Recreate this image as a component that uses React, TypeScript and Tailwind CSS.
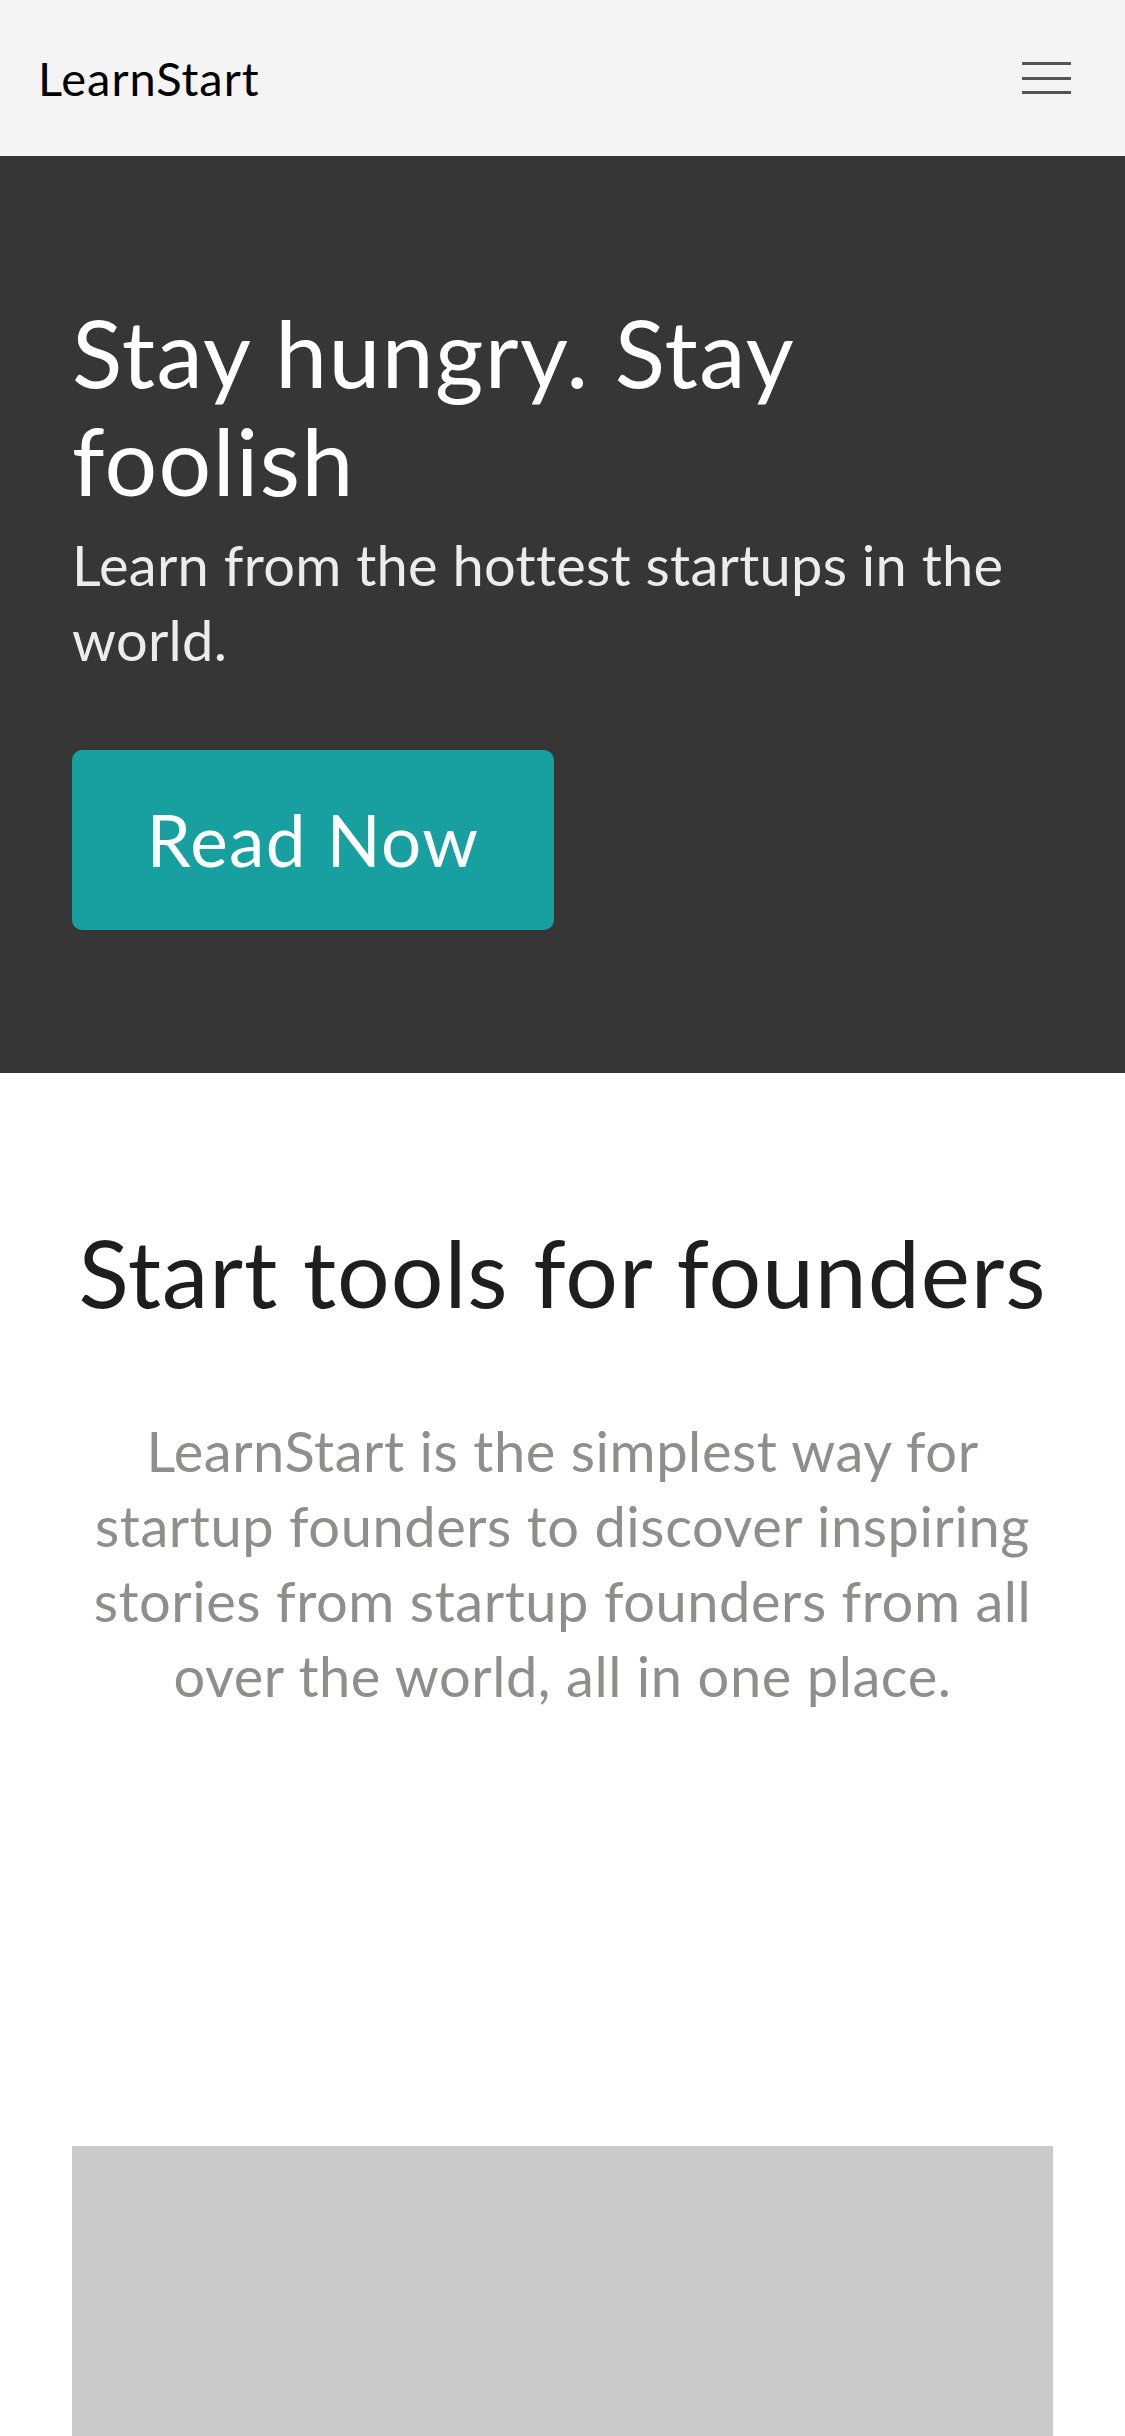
export default function App() {
  return (
    <div className="min-h-screen bg-white font-['Lato','Noto_Sans',sans-serif]">
      {/* navbar */}
      <nav className="flex h-[156px] items-center justify-between bg-[#f4f4f4] pl-[38px] pr-[54px]">
        <a href="#" className="text-[47px] leading-none tracking-[0.02em] text-black">
          LearnStart
        </a>
        <button className="flex w-[49px] flex-col gap-[11.5px]" aria-label="menu">
          <span className="block h-[3px] w-full bg-[#555]" />
          <span className="block h-[3px] w-full bg-[#555]" />
          <span className="block h-[3px] w-full bg-[#555]" />
        </button>
      </nav>

      {/* hero */}
      <header className="bg-[#363636] px-[72px] pt-[142px] pb-[143px]">
        <h1 className="text-[93px] leading-[108px] tracking-[0.015em] text-white">Stay hungry. Stay foolish</h1>
        <p className="mt-[13px] text-[56px] leading-[75px] tracking-[0.005em] text-[#ececec]">
          Learn from the hottest startups in the world.
        </p>
        <a
          href="#"
          className="mt-[73px] flex h-[180px] w-[482px] items-center justify-center rounded-[10px] bg-[#17a09f] text-[71px] tracking-[0.02em] text-white"
        >
          Read Now
        </a>
      </header>

      {/* about */}
      <section className="px-[72px] pt-[144px] text-center">
        <h2 className="whitespace-nowrap text-[93px] leading-[110px] tracking-[0.01em] text-[#1e1e1e]">
          Start tools for founders
        </h2>
        <p className="mt-[86px] text-[56px] leading-[75px] tracking-[0.01em] text-[#8e8e8b]">
          LearnStart is the simplest way for startup founders to discover inspiring stories from startup
          founders from all over the world, all in one place.
        </p>
        <div className="mt-[433px] h-[500px] w-full bg-[#cacaca]" />
      </section>
    </div>
  )
}
